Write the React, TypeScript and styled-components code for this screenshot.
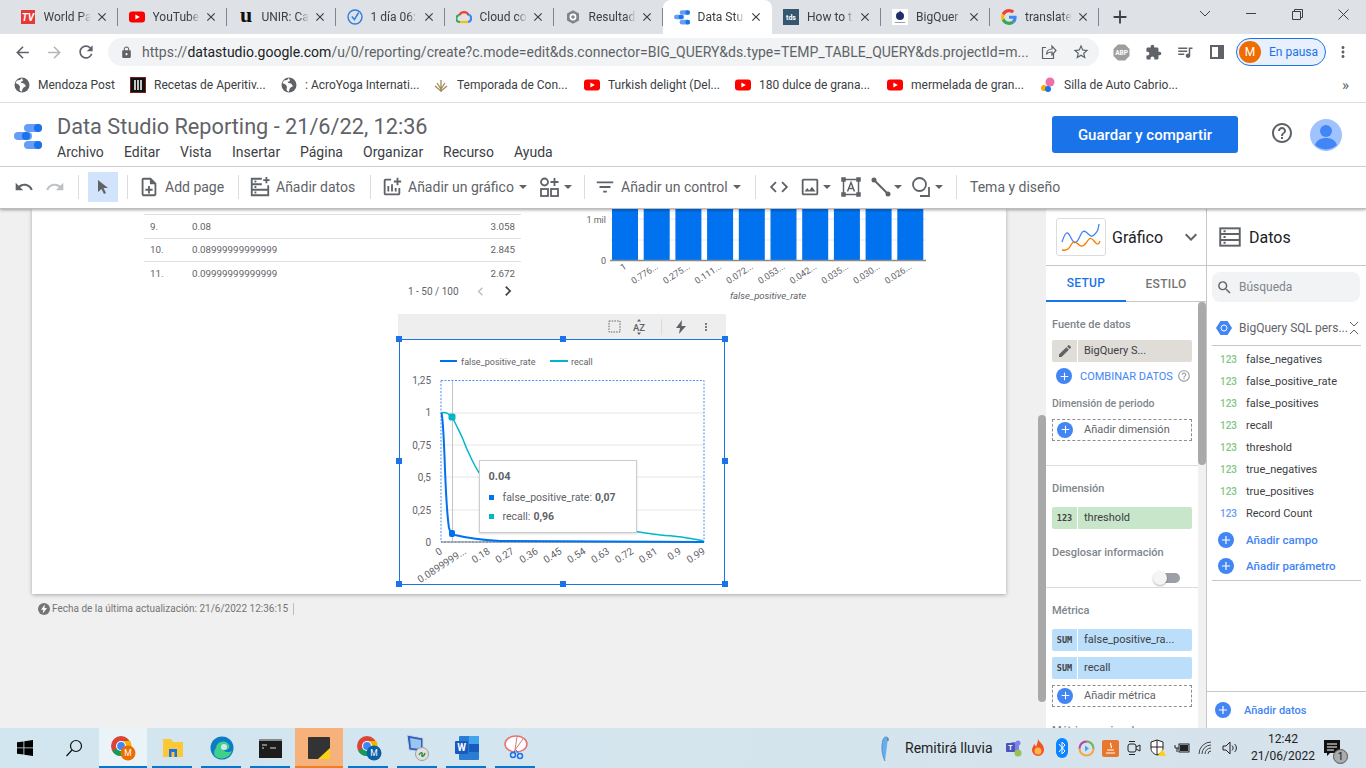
import React from "react";
import styled, { createGlobalStyle } from "styled-components";
import {
  MdArrowBack,
  MdArrowForward,
  MdRefresh,
  MdLock,
  MdStarBorder,
  MdExtension,
  MdClose,
  MdAdd,
  MdMoreVert,
  MdUndo,
  MdRedo,
  MdOutlineNoteAdd,
  MdHelpOutline,
  MdOutlineAddchart,
  MdFilterList,
  MdCode,
  MdOutlineImage,
  MdEdit,
  MdSearch,
  MdKeyboardArrowDown,
  MdChevronLeft,
  MdChevronRight,
  MdQueueMusic,
} from "react-icons/md";

const GlobalStyle = createGlobalStyle`
  html, body { margin: 0; padding: 0; background: #fff; }
  body { font-family: Roboto, "Liberation Sans", sans-serif; }
  * { box-sizing: border-box; }
`;

const Screen = styled.div`
  width: 1366px;
  height: 768px;
  display: flex;
  flex-direction: column;
  overflow: hidden;
  background: #fff;
`;

/* chrome tabs */
const TabStrip = styled.div`
  height: 34px;
  flex: none;
  background: #dee1e6;
  display: flex;
  padding-left: 8.5px;
`;
const Tab = styled.div<{ $active?: boolean }>`
  width: ${(p) => (p.$active ? 109.5 : 109)}px;
  height: 34px;
  display: flex;
  align-items: center;
  padding: 0 9px 0 11px;
  position: relative;
  background: ${(p) => (p.$active ? "#fff" : "transparent")};
  border-radius: 8px 8px 0 0;
  &::after {
    content: "";
    display: ${(p) => (p.$active ? "none" : "block")};
    position: absolute;
    right: 0;
    top: 8px;
    bottom: 8px;
    width: 1px;
    background: #80858c;
  }
`;
const Favicon = styled.span`
  width: 16px;
  height: 16px;
  margin-right: 8px;
  flex: none;
  display: flex;
  align-items: center;
  justify-content: center;
`;
const TabTitle = styled.span`
  flex: 1;
  min-width: 0;
  font-size: 12px;
  color: #3c4043;
  white-space: nowrap;
  -webkit-mask-image: linear-gradient(90deg, #000 78%, transparent 100%);
  mask-image: linear-gradient(90deg, #000 78%, transparent 100%);
`;
const TabClose = styled(MdClose)`
  width: 14px;
  height: 14px;
  flex: none;
  margin-left: 4px;
  color: #3c4043;
`;
const NewTab = styled(MdAdd)`
  width: 22px;
  height: 22px;
  color: #3c4043;
  margin: 6px 0 0 10px;
`;
const WindowControls = styled.div`
  margin-left: auto;
  display: flex;
`;
const WindowButton = styled.div`
  width: 46px;
  height: 28px;
  display: flex;
  align-items: center;
  justify-content: center;
  color: #3c4043;
`;

/* address bar */
const AddressRow = styled.div`
  height: 34px;
  flex: none;
  display: flex;
  align-items: center;
  padding: 2px 0 0 6px;
`;
const NavSlot = styled.div<{ $w?: number; $muted?: boolean }>`
  width: ${(p) => p.$w ?? 32}px;
  height: 28px;
  flex: none;
  display: flex;
  align-items: center;
  justify-content: center;
  color: ${(p) => (p.$muted ? "#b4b7ba" : "#5f6368")};
`;
const Omnibox = styled.div`
  width: 991px;
  height: 28px;
  margin: 0 6px;
  flex: none;
  border-radius: 14px;
  background: #f1f3f4;
  display: flex;
  align-items: center;
  padding: 0 2px 0 12px;
  color: #5f6368;
`;
const UrlText = styled.span`
  font-size: 14px;
  margin-left: 9px;
  flex: 1;
  color: #5f6368;
  white-space: nowrap;
  overflow: hidden;
  b {
    font-weight: 400;
    color: #202124;
  }
`;
const OmniIcon = styled.span`
  width: 32px;
  display: flex;
  justify-content: center;
  color: #5f6368;
`;
const ProfilePill = styled.div`
  width: 90px;
  height: 28px;
  margin-left: 3px;
  flex: none;
  border: 1px solid #1a73e8;
  border-radius: 14px;
  background: #e8f0fe;
  display: flex;
  align-items: center;
  padding-left: 2px;
  gap: 8px;
  font-size: 12px;
  color: #1a73e8;
`;
const ProfileAvatar = styled.span<{ $bg: string; $size?: number }>`
  width: ${(p) => p.$size ?? 22}px;
  height: ${(p) => p.$size ?? 22}px;
  border-radius: 50%;
  background: ${(p) => p.$bg};
  color: #fff;
  font-size: 12px;
  display: flex;
  align-items: center;
  justify-content: center;
  flex: none;
`;

/* bookmarks */
const BookmarkBar = styled.div`
  height: 35px;
  flex: none;
  display: flex;
  align-items: center;
  border-bottom: 1px solid #dadce0;
  padding-left: 14px;
`;
const Bookmark = styled.div<{ $w: number }>`
  width: ${(p) => p.$w}px;
  flex: none;
  display: flex;
  align-items: center;
  gap: 8px;
  font-size: 12px;
  color: #3c4043;
  white-space: nowrap;
`;
const MoreBookmarks = styled.span`
  margin-left: auto;
  margin-right: 17px;
  font-size: 15px;
  color: #5f6368;
`;

/* report header */
const AppHeader = styled.div`
  height: 64px;
  flex: none;
  display: flex;
  align-items: flex-start;
  border-bottom: 1px solid #dadce0;
  padding-left: 14px;
`;
const AppLogo = styled.div`
  width: 43px;
  padding-top: 19px;
  flex: none;
`;
const TitleColumn = styled.div`
  flex: 1;
  padding-top: 10px;
`;
const ReportTitle = styled.div`
  font-size: 21.7px;
  line-height: 28px;
  color: #5f6368;
`;
const MenuBar = styled.div`
  display: flex;
  margin-top: 1px;
  font-size: 14px;
  line-height: 20px;
  color: #3c4043;
`;
const MenuItem = styled.span<{ $w: number }>`
  width: ${(p) => p.$w}px;
  flex: none;
`;
const SaveButton = styled.button`
  width: 186px;
  height: 37px;
  margin-top: 13px;
  flex: none;
  border: 0;
  border-radius: 3px;
  background: #1a73e8;
  color: #fff;
  font: 500 15px Roboto, sans-serif;
`;
const HeaderHelp = styled.div`
  padding: 18px 24px 0 32px;
  display: flex;
  color: #5f6368;
  gap: 16px;
  flex: none;
`;
const AvatarSvg = styled.svg`
  flex: none;
  margin-top: -2px;
`;

/* report toolbar */
const Toolbar = styled.div`
  height: 42px;
  flex: none;
  display: flex;
  align-items: center;
  padding: 0 0 2px 8px;
  position: relative;
  z-index: 2;
  border-bottom: 1px solid #bdbdbd;
  box-shadow: 0 1px 3px rgba(0, 0, 0, 0.35);
  background: #fff;
  color: #5f6368;
  font-size: 14px;
`;
const ToolItem = styled.div<{ $w: number; $pl?: number; $muted?: boolean }>`
  width: ${(p) => p.$w}px;
  height: 30px;
  flex: none;
  display: flex;
  align-items: center;
  justify-content: ${(p) => (p.$pl === undefined ? "center" : "flex-start")};
  padding-left: ${(p) => p.$pl ?? 0}px;
  gap: 5px;
  white-space: nowrap;
  color: ${(p) => (p.$muted ? "#bdc1c6" : "#5f6368")};
`;
const SelectButton = styled.div`
  width: 30px;
  height: 30px;
  margin: 0 9px;
  flex: none;
  background: #d2e3fc;
  display: flex;
  align-items: center;
  justify-content: center;
`;
const ToolDivider = styled.span<{ $ml?: number; $h?: number }>`
  width: 1px;
  height: ${(p) => p.$h ?? 24}px;
  margin-left: ${(p) => p.$ml ?? 0}px;
  flex: none;
  background: #dadce0;
`;
const Caret = styled.span<{ $ml?: number }>`
  width: 0;
  height: 0;
  flex: none;
  margin-left: ${(p) => p.$ml ?? 0}px;
  border-left: 4px solid transparent;
  border-right: 4px solid transparent;
  border-top: 4px solid #5f6368;
`;
const ImageGlyph = styled(MdOutlineImage)`
  margin-left: -3px;
  flex: none;
`;

/* workspace */
const Workspace = styled.div`
  flex: 1;
  min-height: 0;
  display: flex;
`;
const CanvasArea = styled.div`
  width: 1046px;
  flex: none;
  background: #f0f0f0;
  display: flex;
  overflow: hidden;
`;
const CanvasInner = styled.div`
  width: 1038px;
  flex: none;
  padding-left: 32px;
`;
const CanvasScroll = styled.div`
  width: 8px;
  flex: none;
  padding-top: 206px;
`;
const ScrollThumb = styled.div<{ $h: number }>`
  height: ${(p) => p.$h}px;
  width: 8px;
  border-radius: 4px;
  background: #a9a9a9;
`;
const ReportPage = styled.div`
  width: 974px;
  height: 385px;
  background: #fff;
  position: relative;
  box-shadow: 0 1px 4px rgba(0, 0, 0, 0.3);
`;
const TableBlock = styled.div`
  position: absolute;
  left: 112px;
  top: 5px;
  width: 377px;
  font-size: 9.8px;
  color: #5f6368;
`;
const TableRow = styled.div`
  height: 23.5px;
  border-top: 1px solid #e0e0e0;
  display: flex;
  align-items: center;
  padding: 0 6px;
`;
const RowIndex = styled.span`
  width: 42px;
`;
const RowValue = styled.span`
  flex: 1;
`;
const Pager = styled.div`
  position: absolute;
  left: 376px;
  top: 73px;
  width: 120px;
  height: 18px;
  display: flex;
  align-items: center;
  font-size: 10px;
  color: #5f6368;
`;
const PagerPrev = styled(MdChevronLeft)`
  margin-left: 13px;
  color: #bdbdbd;
`;
const PagerNext = styled(MdChevronRight)`
  margin-left: 9px;
  color: #3c4043;
`;
const ChartSvg = styled.svg<{ $x: number; $y: number }>`
  position: absolute;
  left: ${(p) => p.$x}px;
  top: ${(p) => p.$y}px;
  display: block;
`;
const ChartToolbar = styled.div`
  position: absolute;
  left: 366px;
  top: 105px;
  width: 328px;
  height: 25px;
  background: #eee;
  display: flex;
  align-items: center;
  padding-left: 207px;
  color: #5f6368;
`;
const ChartTool = styled.span<{ $w: number }>`
  width: ${(p) => p.$w}px;
  flex: none;
  display: flex;
  justify-content: center;
`;
const ChartFrame = styled.div`
  position: absolute;
  left: 367px;
  top: 130px;
  width: 326px;
  height: 246px;
  border: 1.5px solid #1a73e8;
`;
const Handle = styled.span<{ $x: number; $y: number }>`
  position: absolute;
  left: ${(p) => p.$x}px;
  top: ${(p) => p.$y}px;
  width: 6px;
  height: 6px;
  background: #1a73e8;
`;
const ChartTooltip = styled.div`
  position: absolute;
  left: 446.5px;
  top: 251px;
  width: 158.5px;
  height: 73px;
  background: #fff;
  border: 1px solid #ccc;
  box-shadow: 0 1px 2px rgba(0, 0, 0, 0.15);
  padding: 9px 9px 0;
  font-size: 10.5px;
  color: #5f6368;
`;
const TooltipTitle = styled.div`
  font-weight: 700;
  font-size: 11px;
  line-height: 13px;
  margin-bottom: 5px;
`;
const TooltipRow = styled.div`
  display: flex;
  align-items: center;
  height: 19px;
  white-space: nowrap;
  b {
    margin-left: 3px;
  }
`;
const TooltipDot = styled.span<{ $c: string }>`
  width: 5px;
  height: 5px;
  background: ${(p) => p.$c};
  margin-right: 9px;
  flex: none;
`;
const UpdatedNote = styled.div`
  height: 30px;
  display: flex;
  align-items: center;
  padding-left: 6px;
  font-size: 10px;
  color: #757575;
  gap: 2px;
  span {
    border-right: 1px solid #bdbdbd;
    padding-right: 5px;
    line-height: 12px;
  }
`;

/* right panels */
const SetupPanel = styled.div`
  width: 161px;
  flex: none;
  display: flex;
  flex-direction: column;
  border-right: 1px solid #c6c6c6;
  background: #fff;
`;
const PanelHeader = styled.div<{ $pl: number }>`
  height: 57px;
  flex: none;
  display: flex;
  align-items: center;
  padding-left: ${(p) => p.$pl}px;
  border-bottom: 1px solid #c6c6c6;
  font-size: 16px;
  color: #202124;
  gap: 6px;
`;
const HeaderChevron = styled(MdKeyboardArrowDown)`
  margin: 0 3px 0 auto;
  color: #5f6368;
`;
const ChartThumb = styled.div`
  width: 50px;
  height: 38px;
  border: 1px solid #dadce0;
  border-radius: 3px;
  flex: none;
  display: flex;
  align-items: center;
  justify-content: center;
`;
const TabsRow = styled.div`
  height: 36px;
  flex: none;
  display: flex;
  border-bottom: 1px solid #c6c6c6;
`;
const SetupTab = styled.div<{ $on?: boolean }>`
  width: 80px;
  height: 36px;
  display: flex;
  align-items: center;
  justify-content: center;
  font-size: 12px;
  font-weight: 500;
  letter-spacing: 0.3px;
  padding-bottom: 1px;
  color: ${(p) => (p.$on ? "#1a73e8" : "#757575")};
  border-bottom: ${(p) => (p.$on ? "2px solid #1a73e8" : "0")};
`;
const SetupBody = styled.div`
  flex: 1;
  min-height: 0;
  display: flex;
  overflow: hidden;
`;
const SetupContent = styled.div`
  width: 152px;
  flex: none;
`;
const SetupTrack = styled.div`
  width: 8px;
  flex: none;
  background: #f1f1f1;
`;
const Section = styled.div<{ $h: number }>`
  height: ${(p) => p.$h}px;
  padding: 17px 0 0 6px;
  border-bottom: 1px solid #dadce0;
  &:last-child {
    border-bottom: 0;
  }
`;
const SectionLabel = styled.div<{ $mt?: number; $small?: boolean }>`
  margin-top: ${(p) => p.$mt ?? 0}px;
  height: 12px;
  line-height: 12px;
  font-size: ${(p) => (p.$small ? 10.5 : 11)}px;
  font-weight: 500;
  color: #80868b;
  white-space: nowrap;
`;
const Chip = styled.div<{ $bg: string; $mt: number }>`
  width: 140px;
  height: 22px;
  margin-top: ${(p) => p.$mt}px;
  background: ${(p) => p.$bg};
  border-radius: 2px;
  display: flex;
  align-items: center;
  font-size: 11px;
  color: #3c4043;
  white-space: nowrap;
  overflow: hidden;
`;
const ChipText = styled.span`
  margin-top: -2px;
`;
const ChipTag = styled.span`
  width: 26px;
  height: 22px;
  flex: none;
  border-right: 1px solid #fff;
  margin-right: 6px;
  display: flex;
  align-items: center;
  justify-content: center;
  font-family: "DejaVu Sans Mono", monospace;
  font-size: 8.5px;
  font-weight: 700;
  color: #424242;
`;
const PlusCircle = styled.span<{ $size?: number }>`
  width: ${(p) => p.$size ?? 16}px;
  height: ${(p) => p.$size ?? 16}px;
  border-radius: 50%;
  background: #4285f4;
  color: #fff;
  display: flex;
  align-items: center;
  justify-content: center;
  flex: none;
`;
const CombineRow = styled.div`
  margin: 6px 0 0 4px;
  height: 16px;
  display: flex;
  align-items: center;
  font-size: 11px;
  color: #4285f4;
  gap: 8px;
  white-space: nowrap;
`;
const CombineHelp = styled(MdHelpOutline)`
  margin-left: -4px;
  color: #9aa0a6;
  flex: none;
`;
const DashedSlot = styled.div<{ $mt: number }>`
  width: 140px;
  height: 22px;
  margin-top: ${(p) => p.$mt}px;
  border: 1px dashed #8f8f8f;
  display: flex;
  align-items: center;
  padding: 0 0 1px 4px;
  gap: 11px;
  font-size: 11px;
  color: #5f6368;
`;
const ToggleRow = styled.div`
  margin: 12px 0 0 101px;
  width: 27px;
  height: 14px;
  position: relative;
  display: flex;
  align-items: center;
`;
const ToggleTrack = styled.span`
  margin-left: 6px;
  width: 21px;
  height: 10px;
  border-radius: 5px;
  background: #9aa0a6;
`;
const ToggleKnob = styled.span`
  position: absolute;
  left: 0;
  top: 0;
  width: 14px;
  height: 14px;
  border-radius: 50%;
  background: #f5f5f5;
  box-shadow: 0 1px 2px rgba(0, 0, 0, 0.3);
`;

const DataPanel = styled.div`
  flex: 1;
  display: flex;
  flex-direction: column;
  background: #fff;
  overflow: hidden;
`;
const SearchBox = styled.div`
  margin: 6px 6px 0 5px;
  height: 30px;
  background: #f1f3f4;
  border-radius: 8px;
  display: flex;
  align-items: center;
  padding-left: 4px;
  gap: 6px;
  font-size: 12px;
  color: #80868b;
`;
const SourceRow = styled.div`
  margin: 8px 5px 0;
  height: 36px;
  display: flex;
  align-items: center;
  border-bottom: 1px solid #c6c6c6;
  font-size: 12px;
  color: #5f6368;
  padding-left: 4px;
  white-space: nowrap;
`;
const SourceHex = styled.svg`
  flex: none;
  margin-right: 7px;
`;
const SourceToggle = styled.svg`
  margin: 0 4px 0 auto;
  flex: none;
`;
const FieldList = styled.div`
  margin: 2px 5px 0;
  padding-bottom: 1px;
  border-bottom: 1px solid #c6c6c6;
  flex: none;
`;
const FieldRow = styled.div`
  height: 22px;
  display: flex;
  align-items: center;
  font-size: 11px;
  color: #3c4043;
  padding-left: 8px;
`;
const FieldType = styled.span<{ $c: string }>`
  width: 26px;
  flex: none;
  font-size: 10px;
  font-weight: 500;
  color: ${(p) => p.$c};
`;
const AddRow = styled.div<{ $mt?: number }>`
  height: 26px;
  margin-top: ${(p) => p.$mt ?? 0}px;
  display: flex;
  align-items: center;
  gap: 12px;
  font-size: 11.5px;
  font-weight: 500;
  color: #4285f4;
  padding-left: 6px;
`;
const PanelFooter = styled.div`
  margin-top: auto;
  height: 37px;
  flex: none;
  border-top: 1px solid #c6c6c6;
  display: flex;
  align-items: center;
  padding: 0 0 0 8px;
  gap: 13px;
  font-size: 11px;
  font-weight: 500;
  color: #4285f4;
`;

/* windows taskbar */
const Taskbar = styled.div`
  height: 40px;
  flex: none;
  display: flex;
  align-items: center;
  background: linear-gradient(90deg, #d2e6f0 0%, #d4e5ee 50%, #d6e2ec 100%);
`;
const TaskSlot = styled.div<{ $w?: number; $bg?: string; $bar?: string }>`
  width: ${(p) => p.$w ?? 49}px;
  height: 40px;
  flex: none;
  display: flex;
  align-items: center;
  justify-content: center;
  position: relative;
  background: ${(p) => p.$bg ?? "transparent"};
  &::after {
    content: "";
    display: ${(p) => (p.$bar ? "block" : "none")};
    position: absolute;
    bottom: 0;
    left: ${(p) => (p.$bg ? 0 : 4)}px;
    right: ${(p) => (p.$bg ? 0 : 5)}px;
    height: 2px;
    background: ${(p) => p.$bar};
  }
`;
const TaskGap = styled.div<{ $w: number }>`
  width: ${(p) => p.$w}px;
  flex: none;
`;
const TraySpacer = styled.div`
  flex: 1;
`;
const TrayText = styled.span`
  font-size: 14px;
  color: #1f1f1f;
  margin-left: -4px;
  width: 97px;
  white-space: nowrap;
  flex: none;
`;
const TraySlot = styled.div`
  width: 24px;
  height: 40px;
  flex: none;
  display: flex;
  align-items: center;
  justify-content: center;
`;
const Clock = styled.div`
  width: 74px;
  flex: none;
  text-align: center;
  font-size: 12px;
  line-height: 17px;
  color: #1f1f1f;
  padding-left: 8px;
  white-space: nowrap;
`;
const NotifyWrap = styled.div`
  width: 32px;
  height: 40px;
  flex: none;
  display: flex;
  align-items: center;
  justify-content: center;
  position: relative;
`;
const NotifyBadge = styled.span`
  position: absolute;
  left: 17px;
  top: 21px;
  width: 15px;
  height: 15px;
  border-radius: 50%;
  background: #a8acae;
  border: 1px solid #555;
  color: #111;
  font-size: 10px;
  display: flex;
  align-items: center;
  justify-content: center;
`;

const YouTubeIcon = () => (
  <svg width="16" height="16" viewBox="0 0 16 16">
    <rect x="0" y="2.5" width="16" height="11" rx="3" fill="#f00" />
    <path d="M6.4 5.4 10.8 8l-4.4 2.6z" fill="#fff" />
  </svg>
);
const GlobeIcon = () => (
  <svg width="16" height="16" viewBox="0 0 16 16">
    <circle cx="8" cy="8" r="7.5" fill="#5f6368" />
    <path
      d="M8 1 6 3 3 3.5 1.5 6l3 1.5L6 9.5 5.5 13l2 2 1.5-4 3-2-2-2.5-2.5-.5L6.5 5 9 4z"
      fill="#fff"
    />
  </svg>
);
const LogoMark = ({ size = 28 }: { size?: number }) => (
  <svg width={size} height={size} viewBox="0 0 28 28">
    <rect x="10" y="2" width="18" height="8" rx="4" fill="#669df6" />
    <circle cx="24" cy="6" r="4" fill="#1a73e8" />
    <rect x="0" y="10" width="18" height="8" rx="4" fill="#669df6" />
    <circle cx="12" cy="14" r="4" fill="#1a73e8" />
    <rect x="10" y="19" width="18" height="8" rx="4" fill="#669df6" />
    <circle cx="24" cy="23" r="4" fill="#1a73e8" />
  </svg>
);
const GoogleG = () => (
  <svg width="16" height="16" viewBox="0 0 48 48">
    <path fill="#EA4335" d="M24 9.5c3.5 0 6.7 1.2 9.2 3.6l6.9-6.9C35.9 2.4 30.5 0 24 0 14.6 0 6.5 5.4 2.6 13.2l8 6.2C12.4 13.7 17.7 9.5 24 9.5z" />
    <path fill="#4285F4" d="M46.9 24.5c0-1.6-.1-3.1-.4-4.5H24v9h12.9c-.6 3-2.2 5.5-4.7 7.2l7.7 6c4.5-4.2 7-10.3 7-17.7z" />
    <path fill="#FBBC05" d="M10.5 28.6c-.5-1.4-.8-3-.8-4.6s.3-3.2.8-4.6l-8-6.2C.9 16.5 0 20.1 0 24s.9 7.5 2.6 10.8z" />
    <path fill="#34A853" d="M24 48c6.5 0 11.9-2.1 15.9-5.8l-7.7-6c-2.1 1.4-4.9 2.3-8.2 2.3-6.3 0-11.6-4.2-13.5-9.9l-8 6.2C6.5 42.6 14.6 48 24 48z" />
  </svg>
);
const ChromeIcon = ({ badge, badgeBg }: { badge: string; badgeBg: string }) => (
  <svg width="26" height="26" viewBox="0 0 26 26">
    <circle cx="11" cy="11" r="10" fill="#db4437" />
    <path d="M11 11 2.3 16A10 10 0 0 0 13 20.8z" fill="#0f9d58" />
    <path d="M11 6h9.2A10 10 0 0 1 13 20.8L11 11z" fill="#f4b400" />
    <circle cx="11" cy="11" r="5" fill="#fff" />
    <circle cx="11" cy="11" r="3.9" fill="#4285f4" />
    <circle cx="18" cy="18" r="7.5" fill={badgeBg} />
    <text x="18" y="21" fontSize="8.5" fill="#fff" textAnchor="middle" fontFamily="Roboto, sans-serif">{badge}</text>
  </svg>
);

const tabs = [
  { title: "World Pa", icon: <svg width="14" height="14"><rect width="14" height="14" fill="#e53935" /><text x="7" y="11" fontSize="10" fontWeight="700" fontStyle="italic" fill="#fff" textAnchor="middle" fontFamily="Roboto">TV</text></svg> },
  { title: "YouTube", icon: <YouTubeIcon /> },
  { title: "UNIR: Ca", icon: <svg width="16" height="16" overflow="visible"><text x="8" y="13" fontSize="22" fontWeight="700" fill="#111" textAnchor="middle" fontFamily="Liberation Serif">u</text></svg> },
  { title: "1 día 06:", icon: <svg width="16" height="16" viewBox="0 0 16 16"><circle cx="8" cy="8" r="7" fill="none" stroke="#2f7de1" strokeWidth="1.4" /><path d="M4.8 7.6 7.4 10.4 11.6 3.6" fill="none" stroke="#2f7de1" strokeWidth="1.5" /></svg> },
  { title: "Cloud co", icon: <svg width="16" height="16" viewBox="0 0 16 16"><path d="M4 13a3.5 3.5 0 0 1-.5-7" fill="none" stroke="#34a853" strokeWidth="2.2" /><path d="M3.5 6A5 5 0 0 1 12.6 6" fill="none" stroke="#ea4335" strokeWidth="2.2" /><path d="M12 5.5A3.8 3.8 0 0 1 12 13" fill="none" stroke="#4285f4" strokeWidth="2.2" /><path d="M4 13h8" stroke="#fbbc05" strokeWidth="2.2" /></svg> },
  { title: "Resultad", icon: <svg width="16" height="16" viewBox="0 0 16 16"><path d="M8 1.2 14 4.6v6.8L8 14.8 2 11.4V4.6z" fill="#80868b" /><circle cx="8" cy="8" r="3.4" fill="#fff" /><circle cx="8" cy="8" r="1.8" fill="#80868b" /></svg> },
  { title: "Data Stu", icon: <LogoMark size={16} />, active: true },
  { title: "How to t", icon: <svg width="16" height="16"><rect width="16" height="16" fill="#35566f" /><text x="8" y="11" fontSize="7" fontWeight="700" fill="#fff" textAnchor="middle" fontFamily="Roboto">tds</text></svg> },
  { title: "BigQuer", icon: <svg width="16" height="16" viewBox="0 0 16 16"><rect width="16" height="16" fill="#fff" /><circle cx="8" cy="7" r="4" fill="#1b2f6b" /><path d="M8 1.5 10 4H7z" fill="#1b2f6b" /><rect x="3" y="13" width="10" height="1" fill="#9aa0a6" /></svg> },
  { title: "translate", icon: <GoogleG /> },
];

const bookmarks = [
  { w: 116, label: "Mendoza Post", icon: <GlobeIcon /> },
  { w: 151, label: "Recetas de Aperitiv...", icon: <svg width="16" height="16" viewBox="0 0 16 16"><rect x=".5" y=".5" width="15" height="15" fill="#111" stroke="#7a1f1f" /><path d="M5 3v10M8 3v10M11 3v10" stroke="#fff" strokeWidth="1.5" /></svg> },
  { w: 152, label: ": AcroYoga Internati...", icon: <GlobeIcon /> },
  { w: 151, label: "Temporada de Con...", icon: <svg width="16" height="16" viewBox="0 0 16 16"><path d="M8 15V3M8 12 4 6M8 12l4-6M8 14 2 9M8 14l6-5" stroke="#a08a5c" strokeWidth="1.3" fill="none" /></svg> },
  { w: 151, label: "Turkish delight (Del...", icon: <YouTubeIcon /> },
  { w: 152, label: "180 dulce de grana...", icon: <YouTubeIcon /> },
  { w: 153, label: "mermelada de gran...", icon: <YouTubeIcon /> },
  { w: 150, label: "Silla de Auto Cabrio...", icon: <svg width="16" height="16" viewBox="0 0 16 16"><circle cx="10" cy="5" r="4.5" fill="#ef6fa9" /><circle cx="4" cy="11" r="3" fill="#f9ab00" /><circle cx="8" cy="12" r="3" fill="#1a73e8" /></svg> },
];

const menus: [string, number][] = [
  ["Archivo", 67],
  ["Editar", 56],
  ["Vista", 52],
  ["Insertar", 68],
  ["Página", 63],
  ["Organizar", 80],
  ["Recurso", 71],
  ["Ayuda", 60],
];

const fields = [
  "false_negatives",
  "false_positive_rate",
  "false_positives",
  "recall",
  "threshold",
  "true_negatives",
  "true_positives",
];

const barLabels = ["1", "0.776...", "0.275...", "0.111...", "0.072...", "0.053...", "0.042...", "0.035...", "0.030...", "0.026..."];
const lineLabels = ["0", "0.0899999...", "0.18", "0.27", "0.36", "0.45", "0.54", "0.63", "0.72", "0.81", "0.9", "0.99"];
const handles: [number, number][] = [
  [-4, -4], [159.5, -4], [322, -4],
  [-4, 118], [322, 118],
  [-4, 241], [159.5, 241], [322, 241],
];

const axisFont = { fontFamily: "Roboto, sans-serif", fontSize: 10, fill: "#5f6368" };

const BarChart = () => (
  <ChartSvg $x={552} $y={0} width="390" height="100" viewBox="584 209 390 100">
    {[219, 240].map((y) => (
      <line key={y} x1="610" x2="926" y1={y} y2={y} stroke="#e8e8e8" />
    ))}
    {barLabels.map((t, i) => (
      <rect key={t} x={612 + i * 31.7} y="209" width="26" height="51" fill="#0072f0" />
    ))}
    <line x1="610" x2="926" y1="260.5" y2="260.5" stroke="#8a8a8a" strokeWidth="1.5" />
    <text x="606" y="223" textAnchor="end" {...axisFont} fontSize="9">1 mil</text>
    <text x="606" y="264" textAnchor="end" {...axisFont} fontSize="9">0</text>
    {barLabels.map((t, i) => (
      <text key={t} textAnchor="end" {...axisFont} fontSize="9" transform={`translate(${627 + i * 31.7} 268) rotate(-33)`}>{t}</text>
    ))}
    <text x="768" y="299" textAnchor="middle" {...axisFont} fontSize="9.5" fontStyle="italic">false_positive_rate</text>
  </ChartSvg>
);

const LineChart = () => (
  <ChartSvg $x={367} $y={130} width="327" height="246" viewBox="399 339 327 246">
    <line x1="440" x2="457" y1="361" y2="361" stroke="#0072f0" strokeWidth="2" />
    <text x="461" y="364.5" {...axisFont} fontSize="9">false_positive_rate</text>
    <line x1="550" x2="568" y1="361" y2="361" stroke="#00b6cb" strokeWidth="2" />
    <text x="571" y="364.5" {...axisFont} fontSize="9">recall</text>
    {[413, 445, 477, 510].map((y) => (
      <line key={y} x1="441" x2="704" y1={y} y2={y} stroke="#e6e6e6" />
    ))}
    <rect x="441" y="380.5" width="263" height="161.5" fill="none" stroke="#4a90f0" strokeWidth="1" strokeDasharray="2 1.5" />
    <line x1="452.5" x2="452.5" y1="381" y2="542" stroke="#c4c4c4" />
    <line x1="441" x2="704" y1="542" y2="542" stroke="#777" strokeWidth="1.2" />
    {["1,25", "1", "0,75", "0,5", "0,25", "0"].map((t, i) => (
      <text key={t} x="431" y={384 + i * 32.4} textAnchor="end" {...axisFont}>{t}</text>
    ))}
    {lineLabels.map((t, i) => (
      <text key={t} textAnchor="end" {...axisFont} transform={`translate(${443 + i * 23.9} 553) rotate(-33)`}>{t}</text>
    ))}
    <path
      d="M441.5 412.7C444 412 448 412.5 452 417C456 424 459 431 462 437C465 445 468 452 472 460C474 464 477 470 480 474C520 505 590 525 637 531.7C650 533.5 660 535 670 535.7C682 537 695 538.5 703.5 541"
      fill="none"
      stroke="#00b6cb"
      strokeWidth="1.5"
    />
    <path
      d="M441.5 412.7C443 420 444 440 445 470C446 495 447 515 449 528C450 532 452 534 455 535C465 537.5 480 540 500 541C530 541.7 580 542 704 542"
      fill="none"
      stroke="#0072f0"
      strokeWidth="2"
    />
    <rect x="448.5" y="413.5" width="7" height="7" rx="2" fill="#00b6cb" />
    <rect x="449" y="530" width="6" height="7" rx="2" fill="#0072f0" />
  </ChartSvg>
);

const DataIcon = ({ size = 22 }: { size?: number }) => (
  <svg width={size} height={size} viewBox="0 0 24 24" fill="none" stroke="#5f6368" strokeWidth="2">
    <path d="M14 3H3v18h18V10" />
    <path d="M3 9h11M3 15h18M6 6h2M6 12h2M6 18h2M19 1v7M15.5 4.500h7" />
  </svg>
);
const ListIcon = () => (
  <svg width="26" height="26" viewBox="0 0 24 24" fill="none" stroke="#5f6368" strokeWidth="1.8">
    <rect x="3" y="4" width="18" height="16" />
    <path d="M3 9.3h18M3 14.7h18M6 6.7h2M6 12h2M6 17.3h2" />
  </svg>
);

export default function App() {
  return (
    <Screen>
      <GlobalStyle />
      <TabStrip>
        {tabs.map((t) => (
          <Tab key={t.title} $active={t.active}>
            <Favicon>{t.icon}</Favicon>
            <TabTitle>{t.title}</TabTitle>
            <TabClose />
          </Tab>
        ))}
        <NewTab />
        <WindowControls>
          <WindowButton><svg width="12" height="8" viewBox="0 0 12 8"><path d="M1 1l5 5 5-5" fill="none" stroke="#3c4043" /></svg></WindowButton>
          <WindowButton><svg width="10" height="2"><rect width="10" height="1" fill="#3c4043" /></svg></WindowButton>
          <WindowButton><svg width="11" height="11" viewBox="0 0 11 11"><path d="M.5 2.5h8v8h-8zM2.5 2.5v-2h8v8h-2" fill="none" stroke="#3c4043" /></svg></WindowButton>
          <WindowButton><svg width="11" height="11" viewBox="0 0 11 11"><path d="M.5.5l10 10M10.5.5l-10 10" stroke="#3c4043" /></svg></WindowButton>
        </WindowControls>
      </TabStrip>

      <AddressRow>
        <NavSlot><MdArrowBack size={19} /></NavSlot>
        <NavSlot $muted><MdArrowForward size={19} /></NavSlot>
        <NavSlot><MdRefresh size={20} /></NavSlot>
        <Omnibox>
          <MdLock size={13} />
          <UrlText>
            https://<b>datastudio.google.com</b>/u/0/reporting/create?c.mode=edit&amp;ds.connector=BIG_QUERY&amp;ds.type=TEMP_TABLE_QUERY&amp;ds.projectId=m...
          </UrlText>
          <OmniIcon>
            <svg width="16" height="16" viewBox="0 0 16 16" fill="none" stroke="#5f6368" strokeWidth="1.2">
              <path d="M5 3.5H1.5v11h11V10" />
              <path d="M5.5 10.5c0-3.5 2.5-5.5 5.5-5.5V2l4 4.500-4 4.500V8c-2.500 0-4.500.5-5.500 2.500z" />
            </svg>
          </OmniIcon>
          <OmniIcon><MdStarBorder size={18} /></OmniIcon>
        </Omnibox>
        <NavSlot>
          <svg width="17" height="17" viewBox="0 0 17 17">
            <path d="M5 .5h7L16.5 5v7L12 16.5H5L.5 12V5z" fill="#9e9e9e" />
            <text x="8.5" y="11" fontSize="6.5" fontWeight="700" fill="#fff" textAnchor="middle" fontFamily="Roboto">ABP</text>
          </svg>
        </NavSlot>
        <NavSlot><MdExtension size={17} /></NavSlot>
        <NavSlot><MdQueueMusic size={18} /></NavSlot>
        <NavSlot>
          <svg width="14" height="14" viewBox="0 0 14 14"><path d="M1 1h12v12H1z" fill="none" stroke="#5f6368" strokeWidth="2" /><rect x="8" y="1" width="5" height="12" fill="#5f6368" /></svg>
        </NavSlot>
        <ProfilePill>
          <ProfileAvatar $bg="#ef6c00">M</ProfileAvatar>
          En pausa
        </ProfilePill>
        <NavSlot $w={34}><MdMoreVert size={18} /></NavSlot>
      </AddressRow>

      <BookmarkBar>
        {bookmarks.map((b) => (
          <Bookmark key={b.label} $w={b.w}>
            {b.icon}
            {b.label}
          </Bookmark>
        ))}
        <MoreBookmarks>»</MoreBookmarks>
      </BookmarkBar>

      <AppHeader>
        <AppLogo><LogoMark /></AppLogo>
        <TitleColumn>
          <ReportTitle>Data Studio Reporting - 21/6/22, 12:36</ReportTitle>
          <MenuBar>
            {menus.map(([m, w]) => (
              <MenuItem key={m} $w={w}>{m}</MenuItem>
            ))}
          </MenuBar>
        </TitleColumn>
        <SaveButton>Guardar y compartir</SaveButton>
        <HeaderHelp>
          <MdHelpOutline size={24} />
          <AvatarSvg width="32" height="32" viewBox="0 0 32 32">
            <circle cx="16" cy="16" r="16" fill="#a0c3ff" />
            <circle cx="16" cy="12" r="6" fill="#4285f4" />
            <path d="M5 26c2-6 7-7 11-7s9 1 11 7a16 16 0 0 1-22 0z" fill="#4285f4" />
          </AvatarSvg>
        </HeaderHelp>
      </AppHeader>

      <Toolbar>
        <ToolItem $w={32}><MdUndo size={20} /></ToolItem>
        <ToolItem $w={30} $muted><MdRedo size={20} /></ToolItem>
        <ToolDivider $ml={8} />
        <SelectButton>
          <svg width="14" height="16" viewBox="0 0 14 16"><path d="M2 1v12l3.5-3 2.5 5 2-1-2.5-5H12z" fill="#5f6368" /></svg>
        </SelectButton>
        <ToolDivider />
        <ToolItem $w={110} $pl={10}><MdOutlineNoteAdd size={22} />Add page</ToolItem>
        <ToolDivider />
        <ToolItem $w={131} $pl={10}><DataIcon />Añadir datos</ToolItem>
        <ToolDivider />
        <ToolItem $w={160} $pl={10}><MdOutlineAddchart size={22} />Añadir un gráfico<Caret /></ToolItem>
        <ToolItem $w={53} $pl={8}>
          <svg width="20" height="20" viewBox="0 0 20 20" fill="none" stroke="#5f6368" strokeWidth="1.8"><circle cx="5.5" cy="5" r="3.5" /><rect x="2" y="12" width="7" height="7" /><rect x="12" y="12" width="7" height="7" /><path d="M15.5 1v8M11.5 5h8" /></svg>
          <Caret />
        </ToolItem>
        <ToolDivider />
        <ToolItem $w={170} $pl={9}><MdFilterList size={22} />Añadir un control<Caret /></ToolItem>
        <ToolDivider />
        <ToolItem $w={46}><MdCode size={22} /></ToolItem>
        <ToolItem $w={34} $pl={0}><ImageGlyph size={22} /><Caret $ml={-3} /></ToolItem>
        <ToolItem $w={30}>
          <svg width="20" height="20" viewBox="0 0 20 20" fill="none" stroke="#5f6368" strokeWidth="1.5"><rect x="2.5" y="2.5" width="15" height="15" /><path d="M1 1h3v3H1zM16 1h3v3h-3zM1 16h3v3H1zM16 16h3v3h-3z" fill="#5f6368" /><path d="M6.5 14.5 10 5.5l3.5 9M7.8 11.5h4.4" /></svg>
        </ToolItem>
        <ToolItem $w={40} $pl={5}>
          <svg width="20" height="20" viewBox="0 0 20 20" stroke="#5f6368" fill="#5f6368" strokeWidth="2"><path d="M3 3l14 14" /><circle cx="3" cy="3" r="1.5" /><circle cx="17" cy="17" r="1.5" /></svg>
          <Caret $ml={-2} />
        </ToolItem>
        <ToolItem $w={47} $pl={5}>
          <svg width="22" height="22" viewBox="0 0 22 22" fill="none" stroke="#5f6368" strokeWidth="1.8"><circle cx="8.5" cy="8.5" r="6.5" /><path d="M9 20h9v-9" /></svg>
          <Caret $ml={-3} />
        </ToolItem>
        <ToolDivider $ml={3} />
        <ToolItem $w={120} $pl={13}>Tema y diseño</ToolItem>
      </Toolbar>

      <Workspace>
        <CanvasArea>
          <CanvasInner>
            <ReportPage>
              <TableBlock>
                <TableRow><RowIndex>9.</RowIndex><RowValue>0.08</RowValue>3.058</TableRow>
                <TableRow><RowIndex>10.</RowIndex><RowValue>0.08999999999999</RowValue>2.845</TableRow>
                <TableRow><RowIndex>11.</RowIndex><RowValue>0.09999999999999</RowValue>2.672</TableRow>
              </TableBlock>
              <Pager>
                1 - 50 / 100
                <PagerPrev size={17} />
                <PagerNext size={20} />
              </Pager>
              <BarChart />
              <ChartToolbar>
                <ChartTool $w={18}>
                  <svg width="13" height="13" viewBox="0 0 13 13" fill="none" stroke="#5f6368" strokeDasharray="1.5 1.2"><rect x="1" y="1" width="11" height="11" /></svg>
                </ChartTool>
                <ChartTool $w={32}>
                  <svg width="18" height="16" viewBox="0 0 18 16">
                    <path d="M9 0 11 2.5H7zM9 16l-2-2.500h4z" fill="#5f6368" />
                    <text x="9" y="12" fontSize="9.5" fontWeight="500" fill="#5f6368" textAnchor="middle" fontFamily="Roboto">AZ</text>
                  </svg>
                </ChartTool>
                <ToolDivider $ml={6} $h={16} />
                <ChartTool $w={38}>
                  <svg width="12" height="14" viewBox="0 0 12 14"><path d="M7 0 1 8h4l-1 6 7-8H6.5z" fill="#5f6368" /></svg>
                </ChartTool>
                <ChartTool $w={12}><MdMoreVert size={18} /></ChartTool>
              </ChartToolbar>
              <ChartFrame>
                {handles.map(([x, y]) => (
                  <Handle key={`${x}-${y}`} $x={x} $y={y} />
                ))}
              </ChartFrame>
              <LineChart />
              <ChartTooltip>
                <TooltipTitle>0.04</TooltipTitle>
                <TooltipRow><TooltipDot $c="#0072f0" />false_positive_rate: <b>0,07</b></TooltipRow>
                <TooltipRow><TooltipDot $c="#00b6cb" />recall: <b>0,96</b></TooltipRow>
              </ChartTooltip>
            </ReportPage>
            <UpdatedNote>
              <svg width="12" height="12" viewBox="0 0 12 12">
                <circle cx="6" cy="6" r="6" fill="#757575" />
                <path d="M6.8 1.5 3 6.8h2.300L4.800 10.500 9 5H6.500z" fill="#fff" />
              </svg>
              <span>Fecha de la última actualización: 21/6/2022 12:36:15</span>
            </UpdatedNote>
          </CanvasInner>
          <CanvasScroll><ScrollThumb $h={287} /></CanvasScroll>
        </CanvasArea>

        <SetupPanel>
          <PanelHeader $pl={10}>
            <ChartThumb>
              <svg width="42" height="30" viewBox="0 0 42 30" fill="none" strokeWidth="1.3">
                <path d="M2 20c3-9 5-12 8-6s5 9 8 4 4-11 8-8 5 6 8 3 4-3 5-11" stroke="#4285f4" />
                <path d="M2 28c4 1 7-1 9-5s4-4 7-1 5 3 8-1 4-7 8-2 5 3 6 0" stroke="#f57c00" />
              </svg>
            </ChartThumb>
            Gráfico
            <HeaderChevron size={24} />
          </PanelHeader>
          <TabsRow>
            <SetupTab $on>SETUP</SetupTab>
            <SetupTab>ESTILO</SetupTab>
          </TabsRow>
          <SetupBody>
            <SetupContent>
              <Section $h={164}>
                <SectionLabel>Fuente de datos</SectionLabel>
                <Chip $bg="#e0dcd8" $mt={9}>
                  <ChipTag><MdEdit size={16} color="#5f6368" /></ChipTag>
                  <ChipText>BigQuery S...</ChipText>
                </Chip>
                <CombineRow>
                  <PlusCircle><MdAdd size={13} /></PlusCircle>
                  COMBINAR DATOS
                  <CombineHelp size={14} />
                </CombineRow>
                <SectionLabel $mt={14} $small>Dimensión de periodo</SectionLabel>
                <DashedSlot $mt={9}>
                  <PlusCircle><MdAdd size={13} /></PlusCircle>
                  Añadir dimensión
                </DashedSlot>
              </Section>
              <Section $h={122}>
                <SectionLabel>Dimensión</SectionLabel>
                <Chip $bg="#c8e6c9" $mt={12}><ChipTag>123</ChipTag><ChipText>threshold</ChipText></Chip>
                <SectionLabel $mt={18}>Desglosar información</SectionLabel>
                <ToggleRow><ToggleTrack /><ToggleKnob /></ToggleRow>
              </Section>
              <Section $h={200}>
                <SectionLabel>Métrica</SectionLabel>
                <Chip $bg="#bbdefb" $mt={12}><ChipTag>SUM</ChipTag><ChipText>false_positive_ra...</ChipText></Chip>
                <Chip $bg="#bbdefb" $mt={6}><ChipTag>SUM</ChipTag><ChipText>recall</ChipText></Chip>
                <DashedSlot $mt={6}>
                  <PlusCircle><MdAdd size={13} /></PlusCircle>
                  Añadir métrica
                </DashedSlot>
                <SectionLabel $mt={18}>Métrica opcional</SectionLabel>
              </Section>
            </SetupContent>
            <SetupTrack><ScrollThumb $h={163} /></SetupTrack>
          </SetupBody>
        </SetupPanel>

        <DataPanel>
          <PanelHeader $pl={10}>
            <ListIcon />
            Datos
          </PanelHeader>
          <SearchBox>
            <MdSearch size={17} color="#5f6368" />
            Búsqueda
          </SearchBox>
          <SourceRow>
            <SourceHex width="16" height="16" viewBox="0 0 16 16">
              <path d="M4.5 1h7L16 8l-4.5 7h-7L0 8z" fill="#4285f4" />
              <circle cx="8" cy="8" r="3" fill="none" stroke="#fff" />
            </SourceHex>
            BigQuery SQL pers...
            <SourceToggle width="12" height="14" viewBox="0 0 12 14" fill="none" stroke="#5f6368">
              <path d="M2 1l4 4 4-4M2 13l4-4 4 4" />
            </SourceToggle>
          </SourceRow>
          <FieldList>
            {fields.map((f) => (
              <FieldRow key={f}><FieldType $c="#81c784">123</FieldType>{f}</FieldRow>
            ))}
            <FieldRow><FieldType $c="#669df6">123</FieldType>Record Count</FieldRow>
            <AddRow $mt={3}><PlusCircle><MdAdd size={14} /></PlusCircle>Añadir campo</AddRow>
            <AddRow><PlusCircle><MdAdd size={14} /></PlusCircle>Añadir parámetro</AddRow>
          </FieldList>
          <PanelFooter>
            <PlusCircle><MdAdd size={14} /></PlusCircle>
            Añadir datos
          </PanelFooter>
        </DataPanel>
      </Workspace>

      <Taskbar>
        <TaskSlot>
          <svg width="16" height="16" viewBox="0 0 16 16" fill="#000"><path d="M0 2.3 6.5 1.4V7.5H0zM7.3 1.3 16 0v7.5H7.3zM0 8.3h6.5v6.3L0 13.7zM7.3 8.3H16V16l-8.700-1.200z" /></svg>
        </TaskSlot>
        <TaskSlot>
          <svg width="18" height="18" viewBox="0 0 18 18" fill="none" stroke="#111" strokeWidth="1.2"><circle cx="11" cy="7" r="5.5" /><path d="M7 11 1.5 17" /></svg>
        </TaskSlot>
        <TaskGap $w={1} />
        <TaskSlot $w={48} $bg="#eaf3f8" $bar="#0078d4"><ChromeIcon badge="M" badgeBg="#ef6c00" /></TaskSlot>
        <TaskGap $w={1} />
        <TaskSlot $bar="#0078d4">
          <svg width="22" height="20" viewBox="0 0 22 20"><path d="M1 1h8l2 3h10v15H1z" fill="#fcc934" /><rect x="7" y="11" width="8" height="8" fill="#1a73e8" /><rect x="9.5" y="14" width="3" height="5" fill="#fcc934" /></svg>
        </TaskSlot>
        <TaskSlot $bar="#0078d4">
          <svg width="24" height="24" viewBox="0 0 24 24"><circle cx="12" cy="12" r="11.5" fill="#0c7cc4" /><path d="M6 12a7 7 0 0 1 13-3c2 4-3 6-6 5 2 2 6 3 9 1a11 11 0 0 1-16 6C3 19 4 14 6 12z" fill="#3fd08a" /><circle cx="14" cy="11" r="3" fill="#d3e6ef" /></svg>
        </TaskSlot>
        <TaskSlot $bar="#0078d4">
          <svg width="23" height="19" viewBox="0 0 23 19"><rect width="23" height="19" fill="#1c1c1c" /><rect width="23" height="2" fill="#8a8a8a" /><path d="M3 6h5M3 9h2M11 9h6" stroke="#ddd" /></svg>
        </TaskSlot>
        <TaskSlot $w={48} $bg="#f7b27c" $bar="#f07d1f">
          <svg width="22" height="22" viewBox="0 0 22 22"><rect width="22" height="22" rx="1" fill="#333" /><path d="M10 22 22 11v11z" fill="#fcd116" /></svg>
        </TaskSlot>
        <TaskGap $w={1} />
        <TaskSlot $bar="#0078d4"><ChromeIcon badge="M" badgeBg="#0b5fa5" /></TaskSlot>
        <TaskSlot $bar="#0078d4">
          <svg width="24" height="28" viewBox="0 0 24 28"><path d="M1 1l16 3v14L3 16z" fill="#2f5fc4" stroke="#cfd8dc" /><path d="M4 4l11 2v9L5 14z" fill="#9cc4ef" /><circle cx="16" cy="20" r="6.5" fill="#e0e0e0" stroke="#9e9e9e" /><path d="M13 21c2-4 4-2 3 0s2 2 3-2" fill="none" stroke="#3e8e41" strokeWidth="1.5" /></svg>
        </TaskSlot>
        <TaskSlot $bar="#0078d4">
          <svg width="24" height="24" viewBox="0 0 24 24"><rect x="4" y="0" width="20" height="24" rx="1" fill="#2b7cd3" /><rect x="14" y="8" width="10" height="8" fill="#185abd" /><rect x="14" y="0" width="10" height="8" fill="#41a5ee" /><rect x="0" y="5" width="13" height="13" rx="1" fill="#185abd" /><text x="6.5" y="15" fontSize="10" fontWeight="700" fill="#fff" textAnchor="middle" fontFamily="Roboto">W</text></svg>
        </TaskSlot>
        <TaskSlot $bar="#0078d4">
          <svg width="26" height="28" viewBox="0 0 26 28" fill="none"><ellipse cx="13" cy="10" rx="11" ry="8" stroke="#e57373" strokeWidth="1.5" fill="#fff" /><path d="M14 3 12 16M20 5l-8 11" stroke="#e57373" /><circle cx="10" cy="21" r="2.5" stroke="#1a73e8" strokeWidth="1.5" /><circle cx="17" cy="22" r="2.5" stroke="#1a73e8" strokeWidth="1.5" /><path d="M12 16l-1 3M13 16l3 4" stroke="#1a73e8" /></svg>
        </TaskSlot>

        <TraySpacer />
        <TaskSlot $w={48}>
          <svg width="10" height="26" viewBox="0 0 10 26"><path d="M5 26C2 20 1 12 3 5c1-3 3-4 5-2" fill="#6aaee8" stroke="#4a90d9" /><path d="M8 3v3" stroke="#555" /></svg>
        </TaskSlot>
        <TrayText>Remitirá lluvia</TrayText>
        <TraySlot>
          <svg width="18" height="18" viewBox="0 0 18 18"><circle cx="13" cy="4" r="2.5" fill="#7b83eb" /><rect x="6" y="3" width="8" height="10" rx="1" fill="#7b83eb" /><rect x="1" y="4" width="9" height="9" rx="1" fill="#4b53bc" /><text x="5.5" y="11" fontSize="7" fontWeight="700" fill="#fff" textAnchor="middle" fontFamily="Roboto">T</text><circle cx="13" cy="14" r="3.5" fill="#92c353" /></svg>
        </TraySlot>
        <TraySlot>
          <svg width="16" height="18" viewBox="0 0 16 18"><path d="M8 0c1 3 6 5 6 11a6 6 0 0 1-12 0c0-3 2-4 2-6 1 1 2 2 2 3 1-3 2-5 2-8z" fill="#f4511e" /><circle cx="8" cy="12" r="3.5" fill="#ffb74d" /></svg>
        </TraySlot>
        <TraySlot>
          <svg width="12" height="20" viewBox="0 0 12 20"><rect width="12" height="20" rx="6" fill="#0a84ff" /><path d="M3 6l6 7-3 3V4l3 3-6 7" fill="none" stroke="#fff" /></svg>
        </TraySlot>
        <TraySlot>
          <svg width="17" height="17" viewBox="0 0 17 17" fill="none"><circle cx="8.5" cy="8.5" r="7" stroke="#f4a742" strokeWidth="2" /><path d="M8.5 1.5a7 7 0 0 1 7 7" stroke="#66bb6a" strokeWidth="2" /><path d="M1.5 8.5a7 7 0 0 1 7-7" stroke="#ab47bc" strokeWidth="2" /><path d="M7 5.5l4 3-4 3z" fill="#42a5f5" /></svg>
        </TraySlot>
        <TraySlot>
          <svg width="17" height="17" viewBox="0 0 17 17"><rect width="17" height="17" rx="2" fill="#e8762d" /><path d="M4 13h9M5 10h7M9 3c-2 2 2 3 0 5" stroke="#fff" fill="none" strokeWidth="1.2" /></svg>
        </TraySlot>
        <TraySlot>
          <svg width="16" height="16" viewBox="0 0 16 16" fill="none" stroke="#222"><rect x="2" y="4" width="8" height="8" rx="2" /><path d="M10 7l4-2v6l-4-2M3 1.5h6M3 14.5h6" /></svg>
        </TraySlot>
        <TraySlot>
          <svg width="18" height="18" viewBox="0 0 18 18"><path d="M8 1l6 2v6c0 4-3 6-6 7-3-1-6-3-6-7V3z" fill="#fff" stroke="#222" /><path d="M8 1v15M2 8h12" stroke="#222" /><path d="M13 10l4 7H9z" fill="#fcd116" /></svg>
        </TraySlot>
        <TraySlot>
          <svg width="16" height="14" viewBox="0 0 16 14" fill="none" stroke="#222"><rect x="5" y="3" width="10" height="8" /><rect x="6.5" y="4.5" width="7" height="5" fill="#222" /><path d="M1 4v3h4M3 7v4" /></svg>
        </TraySlot>
        <TraySlot>
          <svg width="16" height="14" viewBox="0 0 16 14" fill="none" stroke="#444"><path d="M1 13a12 12 0 0 1 12-12M4 13a9 9 0 0 1 9-9M7 13a6 6 0 0 1 6-6M10 13a3 3 0 0 1 3-3" /></svg>
        </TraySlot>
        <TraySlot>
          <svg width="16" height="14" viewBox="0 0 16 14" fill="none" stroke="#222"><path d="M1 5h3l4-4v12l-4-4H1zM10 4.5c1.500 1.500 1.500 3.500 0 5M12.500 3c2.500 2 2.500 6 0 8" /></svg>
        </TraySlot>
        <Clock>
          12:42
          <br />
          21/06/2022
        </Clock>
        <NotifyWrap>
          <svg width="16" height="16" viewBox="0 0 16 16"><path d="M0 0h16v13H6l-3 3v-3H0z" fill="#111" /><path d="M3 4h10M3 7h10M3 10h7" stroke="#fff" /></svg>
          <NotifyBadge>1</NotifyBadge>
        </NotifyWrap>
        <TaskGap $w={18} />
      </Taskbar>
    </Screen>
  );
}
